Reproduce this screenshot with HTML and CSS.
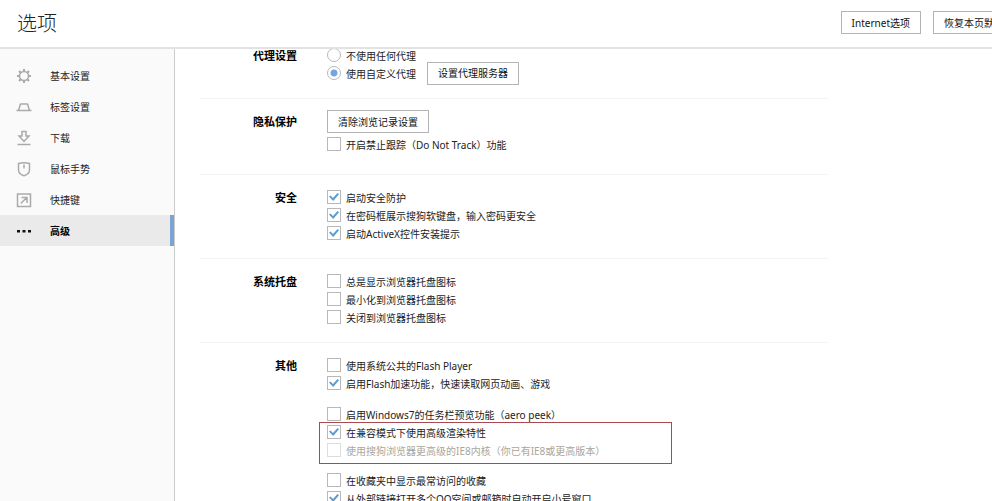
FILE: index.html
```
<!DOCTYPE html>
<html lang="zh-CN">
<head>
  <meta charset="UTF-8" />
  <meta name="viewport" content="width=device-width, initial-scale=1.0"/>
  <title>选项</title>
  <link rel="stylesheet" href="styles.css">
</head>
<body>

  <header class="topbar">
    <h1>选项</h1>
    <div class="actions">
      <button class="btn" type="button">Internet选项</button>
      <button class="btn" type="button">恢复本页默认设置</button>
    </div>
  </header>

  <div class="page">
    <nav class="sidebar">
      <a href="#basic">
        <svg viewBox="0 0 16 16"><circle cx="8" cy="8" r="4.500"/><path class="teeth" d="M8 1v2.500M8 12.500V15M1 8h2.500M12.500 8H15M3 3l1.700 1.700M11.300 11.300L13 13M13 3l-1.700 1.700M4.700 11.300L3 13"/></svg>
        基本设置
      </a>
      <a href="#tabs">
        <svg viewBox="0 0 16 16"><path d="M.5 11.500h15M2.500 11.500L4.500 5h7l2 6.500"/></svg>
        标签设置
      </a>
      <a href="#download">
        <svg viewBox="0 0 16 16"><path d="M1.500 14.500h13M6 1.500h4v4.500h3L8 11.500 3 6h3z"/></svg>
        下载
      </a>
      <a href="#mouse">
        <svg viewBox="0 0 16 16"><path d="M2.500 2.500Q8 .8 13.500 2.500V9Q13.500 13 8 14.800 2.500 13 2.500 9zM8 3.500v4"/></svg>
        鼠标手势
      </a>
      <a href="#keys">
        <svg viewBox="0 0 16 16"><path d="M1.500 2h13v12.500h-13zM4.800 11.500l5.500-5.500M5.500 5.500h5.500v5.500"/></svg>
        快捷键
      </a>
      <a class="active" href="#advanced">
        <svg viewBox="0 0 16 16"><path class="dots" d="M1 7h3v2.500H1zM6.500 7h3v2.500h-3zM12 7h3v2.500h-3z"/></svg>
        高级
      </a>
    </nav>

    <main class="content">
      <section>
        <h2>代理设置</h2>
        <div class="options">
          <label><input type="radio" name="proxy">不使用任何代理</label>
          <div class="row">
            <label><input type="radio" name="proxy" checked>使用自定义代理</label>
            <button class="btn" type="button">设置代理服务器</button>
          </div>
        </div>
      </section>

      <section class="privacy">
        <h2>隐私保护</h2>
        <div class="options">
          <button class="btn" type="button">清除浏览记录设置</button>
          <label><input type="checkbox">开启禁止跟踪（Do Not Track）功能</label>
        </div>
      </section>

      <section>
        <h2>安全</h2>
        <div class="options">
          <label><input type="checkbox" checked>启动安全防护</label>
          <label><input type="checkbox" checked>在密码框展示搜狗软键盘，输入密码更安全</label>
          <label><input type="checkbox" checked>启动ActiveX控件安装提示</label>
        </div>
      </section>

      <section>
        <h2>系统托盘</h2>
        <div class="options">
          <label><input type="checkbox">总是显示浏览器托盘图标</label>
          <label><input type="checkbox">最小化到浏览器托盘图标</label>
          <label><input type="checkbox">关闭到浏览器托盘图标</label>
        </div>
      </section>

      <section>
        <h2>其他</h2>
        <div class="options">
          <div class="group">
            <label><input type="checkbox">使用系统公共的Flash Player</label>
            <label><input type="checkbox" checked>启用Flash加速功能，快速读取网页动画、游戏</label>
          </div>
          <label><input type="checkbox">启用Windows7的任务栏预览功能（aero peek）</label>
          <div class="highlight">
            <label><input type="checkbox" checked>在兼容模式下使用高级渲染特性</label>
            <label class="disabled"><input type="checkbox" disabled>使用搜狗浏览器更高级的IE8内核（你已有IE8或更高版本）</label>
          </div>
          <label><input type="checkbox">在收藏夹中显示最常访问的收藏</label>
          <label><input type="checkbox" checked>从外部链接打开多个QQ空间或邮箱时自动开启小号窗口</label>
        </div>
      </section>
    </main>
  </div>

</body>
</html>
```
FILE: styles.css
```
* {
  box-sizing: border-box;
}

body {
  margin: 0;
  min-width: 1050px;
  height: 100vh;
  overflow: hidden;
  display: flex;
  flex-direction: column;
  background: #fff;
  color: #222;
  font-family: "Noto Sans", "Noto Sans CJK SC", sans-serif;
  font-size: 10px;
}

.topbar {
  position: relative;
  z-index: 1;
  flex: none;
  display: flex;
  align-items: center;
  justify-content: space-between;
  height: 49px;
  padding: 0 15px 2px 17px;
  background: #fff;
  border-bottom: 2px solid #e2e2e2;
}

h1 {
  margin: 0;
  padding-top: 2px;
  font-size: 20px;
  line-height: 28px;
  font-weight: 300;
}

.actions {
  display: flex;
  gap: 12px;
}

.btn {
  height: 23px;
  padding: 0 10px;
  border: 1px solid #b4b4b4;
  background: #fff;
  color: #111;
  font: inherit;
  line-height: 20px;
  white-space: nowrap;
}

.page {
  flex: 1;
  display: flex;
  min-height: 0;
}

.sidebar {
  flex: none;
  width: 175px;
  padding-top: 11px;
  background: #fafafa;
  border-right: 1px solid #ccc;
}

.sidebar a {
  display: flex;
  align-items: center;
  gap: 18px;
  height: 31px;
  padding-left: 16px;
  color: #222;
  text-decoration: none;
}

.sidebar svg {
  width: 16px;
  height: 16px;
  fill: none;
  stroke: #aaa;
  stroke-width: 1.5;
}

.sidebar .teeth {
  stroke-width: 2;
}

.sidebar .active {
  background: #eaeaea;
  border-right: 4px solid #7ba3d4;
  color: #000;
  font-weight: bold;
}

.sidebar .dots {
  fill: #111;
  stroke: none;
}

.content {
  flex: 1;
  margin-top: -16px;
  padding-left: 25px;
}

section {
  display: flex;
  gap: 30px;
  max-width: 628px;
  padding: 13px 0 16px;
  border-bottom: 1px solid #f4f4f4;
}

section:last-child {
  border-bottom: none;
}

h2 {
  width: 97px;
  margin: 0;
  color: #000;
  font-size: 11px;
  line-height: 20px;
  text-align: right;
}

label {
  display: flex;
  align-items: center;
  height: 18px;
  white-space: nowrap;
}

input {
  appearance: none;
  width: 14px;
  height: 14px;
  margin: 0 5px 0 0;
  border: 1px solid #b8b8b8;
  background: #fff;
}

input[type="radio"] {
  border-radius: 50%;
}

input[type="radio"]:checked {
  background: radial-gradient(circle, #76a5dc 3px, #fff 4px);
}

input[type="checkbox"]:checked {
  display: grid;
  place-items: center;
}

input[type="checkbox"]:checked::before {
  content: "";
  width: 10px;
  height: 8px;
  background: #5b9bd0;
  clip-path: polygon(0 45%, 15% 30%, 40% 62%, 85% 0, 100% 15%, 42% 100%);
}

.row {
  display: flex;
  align-items: center;
  gap: 11px;
  height: 18px;
}

.privacy {
  padding-bottom: 21px;
}

.privacy .btn {
  margin: -2px 0 2px;
}

.group {
  margin-bottom: 13px;
}

.highlight {
  width: 353px;
  margin: -1px 0 7px -8px;
  padding: 0 7px 4px;
  border: 1px solid #a84a50;
}

.disabled {
  color: #aaa69a;
}

.disabled input {
  border-color: #ddd;
}
```
